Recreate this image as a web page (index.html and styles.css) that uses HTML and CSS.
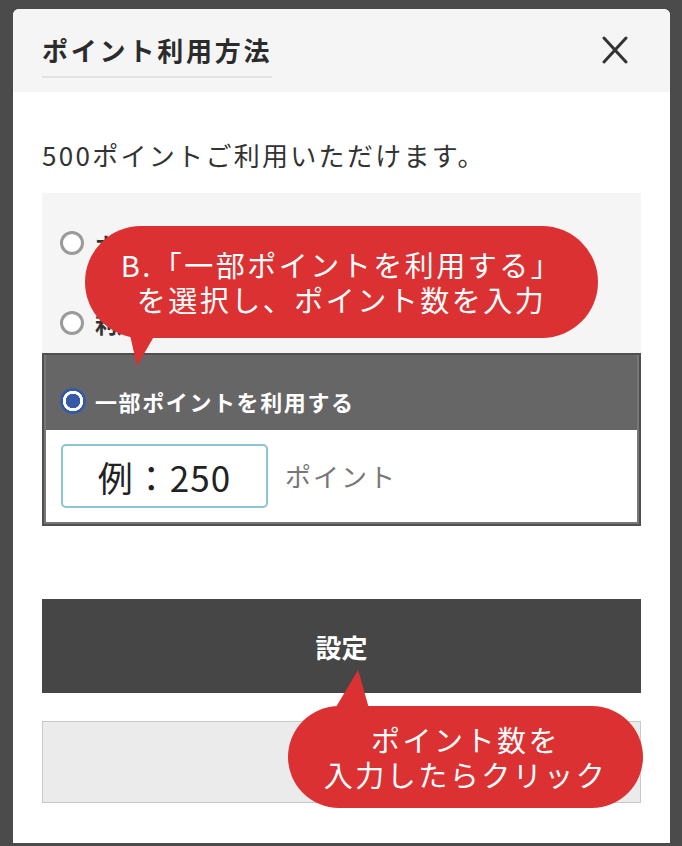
FILE: index.html
```html
<!DOCTYPE html>
<html lang="ja">

<head>
    <meta charset="UTF-8">
    <meta name="viewport" content="width=device-width, initial-scale=1.0">
    <title>ポイント利用方法</title>

    <link rel="stylesheet" href="styles.css">
</head>

<body>
    <div class="modal">
        <header class="modal-head">
            <h1 class="modal-title">ポイント利用方法</h1>
            <a href="#" class="close-btn" aria-label="閉じる">
                <svg width="28" height="28" viewBox="0 0 28 28">
                    <path d="M3 2 L25 26 M25 2 L3 26" stroke="#333" stroke-width="3" stroke-linecap="round" fill="none" />
                </svg>
            </a>
        </header>
        <main class="modal-body">
            <p class="point-note">500ポイントご利用いただけます。</p>
            <ul class="options">
                <li class="option"><span class="radio"></span>ポイントを全て利用する</li>
                <li class="option"><span class="radio"></span>利用しない</li>
                <li class="option selected">
                    <div class="option-head"><span class="radio checked"></span>一部ポイントを利用する</div>
                    <div class="option-input">
                        <input type="text" class="point-input" placeholder="例：250">
                        <span class="unit">ポイント</span>
                    </div>
                </li>
            </ul>
            <button class="btn btn-set">設定</button>
            <button class="btn btn-cancel">キャンセル</button>
        </main>

        <div class="bubble bubble-select">B.「一部ポイントを利用する」<br>を選択し、ポイント数を入力</div>
        <div class="bubble bubble-click">ポイント数を<br>入力したらクリック</div>
    </div>
</body>

</html>
```

FILE: styles.css
```css
* {
    padding: 0;
    margin: 0;
    box-sizing: border-box;
    font-family: "Noto Sans CJK JP", "Noto Sans", sans-serif;
}

a {
    text-decoration: none;
}

ul {
    list-style: none;
}

body {
    background-color: #4b4b4b;
    height: 846px;
    overflow: hidden;
}

.modal {
    position: relative;
    width: 657px;
    height: 834px;
    margin: 9px 0 0 13px;
    background-color: #fff;
    border-radius: 6px 6px 0 0;
}

.modal-head {
    height: 83px;
    padding: 23px 33px 0 29px;
    display: flex;
    justify-content: space-between;
    align-items: flex-start;
    background-color: #f5f5f5;
    border-radius: 6px 6px 0 0;
}

.modal-title {
    display: inline-block;
    font-size: 26px;
    line-height: 36px;
    letter-spacing: 2.8px;
    font-weight: bold;
    color: #2b2b2b;
    padding-bottom: 8px;
    border-bottom: 2px solid #e3e3e3;
}

.close-btn {
    width: 44px;
    height: 44px;
    margin-top: -4px;
    display: flex;
    align-items: center;
    justify-content: center;
}

.modal-body {
    padding: 45px 29px 0;
}

.point-note {
    font-size: 26px;
    line-height: 36px;
    letter-spacing: 2.3px;
    color: #333;
}

.options {
    margin-top: 20px;
    background-color: #f5f5f5;
}

.option {
    display: flex;
    align-items: center;
    gap: 11px;
    padding: 38px 18px 18px;
    font-size: 22px;
    line-height: 24px;
    font-weight: bold;
    color: #333;
}

.radio {
    width: 24px;
    height: 24px;
    flex-shrink: 0;
    border-radius: 50%;
    border: 3px solid #9a9a9a;
    background-color: #fff;
}

.radio.checked {
    width: 26px;
    height: 26px;
    border: none;
    background: radial-gradient(circle, #3558a8 0 7px, #fff 7.5px 10px, #3558a8 10.5px);
}

.option.selected {
    display: block;
    padding: 0 2px 2px;
    border: 2px solid #4f4f4f;
    background-color: #777;
}

.option-head {
    display: flex;
    align-items: center;
    gap: 9px;
    padding: 33px 14px 16px;
    background-color: #666;
    color: #fff;
    letter-spacing: 1.6px;
}

.option-input {
    display: flex;
    align-items: center;
    gap: 17px;
    padding: 14px 15px;
    background-color: #fff;
}

.point-input {
    width: 207px;
    height: 64px;
    border: 2px solid #8cc4d4;
    border-radius: 5px;
    font-size: 35px;
    letter-spacing: 1px;
    text-align: center;
    color: #222;
    outline: none;
}

.point-input::placeholder {
    color: #222;
}

.unit {
    font-size: 26px;
    letter-spacing: 2px;
    font-weight: normal;
    color: #777;
}

.btn {
    display: block;
    width: 100%;
    border: none;
    font-size: 26px;
    cursor: pointer;
}

.btn-set {
    height: 94px;
    margin-top: 73px;
    background-color: #464646;
    color: #fff;
    font-weight: bold;
}

.btn-cancel {
    height: 82px;
    margin-top: 28px;
    background-color: #ebebeb;
    border: 1px solid #c9c9c9;
    color: #445580;
    font-size: 20px;
}

.bubble {
    position: absolute;
    display: flex;
    align-items: center;
    justify-content: center;
    text-align: center;
    background-color: #dc3132;
    color: #fff;
    font-size: 29px;
    line-height: 35px;
    letter-spacing: 2.5px;
    border-radius: 60px;
}

.bubble::after {
    content: "";
    position: absolute;
    background-color: #dc3132;
}

.bubble-select {
    left: 72px;
    top: 217px;
    width: 513px;
    height: 112px;
}

.bubble-select::after {
    left: 43px;
    top: 100px;
    width: 32px;
    height: 40px;
    clip-path: polygon(0 0, 100% 0, 28% 100%);
}

.bubble-click {
    left: 275px;
    top: 697px;
    width: 355px;
    height: 102px;
}

.bubble-click::after {
    left: 45px;
    top: -36px;
    width: 37px;
    height: 42px;
    clip-path: polygon(68% 0, 100% 100%, 0 100%);
}
```
